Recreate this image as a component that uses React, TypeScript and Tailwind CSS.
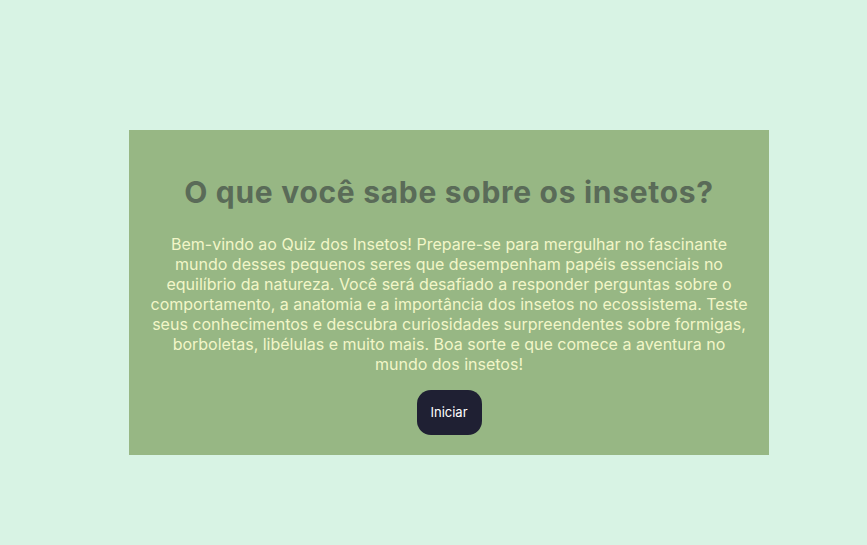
export default function App() {
  return (
    <div className="min-h-[545px] w-full bg-[#d8f3e4] pt-[130px] font-['Inter',sans-serif]">
      <section className="ml-[129px] flex w-[640px] flex-col items-center bg-[#97b784] px-[20px] pb-[20px] pt-[44px] text-center">
        <h1 className="font-['Inter',sans-serif] text-[30px] font-bold leading-[36px] tracking-[0.7px] text-[#5a6b58]">
          O que você sabe sobre os insetos?
        </h1>
        <p className="mt-[24px] text-[16px] leading-[20px] text-[#f2f6c8]">
          Bem-vindo ao Quiz dos Insetos! Prepare-se para mergulhar no fascinante mundo desses pequenos seres que
          desempenham papéis essenciais no equilíbrio da natureza. Você será desafiado a responder perguntas sobre o
          comportamento, a anatomia e a importância dos insetos no ecossistema. Teste seus conhecimentos e descubra
          curiosidades surpreendentes sobre formigas, borboletas, libélulas e muito mais. Boa sorte e que comece a
          aventura no mundo dos insetos!
        </p>
        <button className="mt-[16px] h-[45px] w-[65px] rounded-[14px] bg-[#1f2033] text-[13px] text-white">
          Iniciar
        </button>
      </section>
    </div>
  );
}
